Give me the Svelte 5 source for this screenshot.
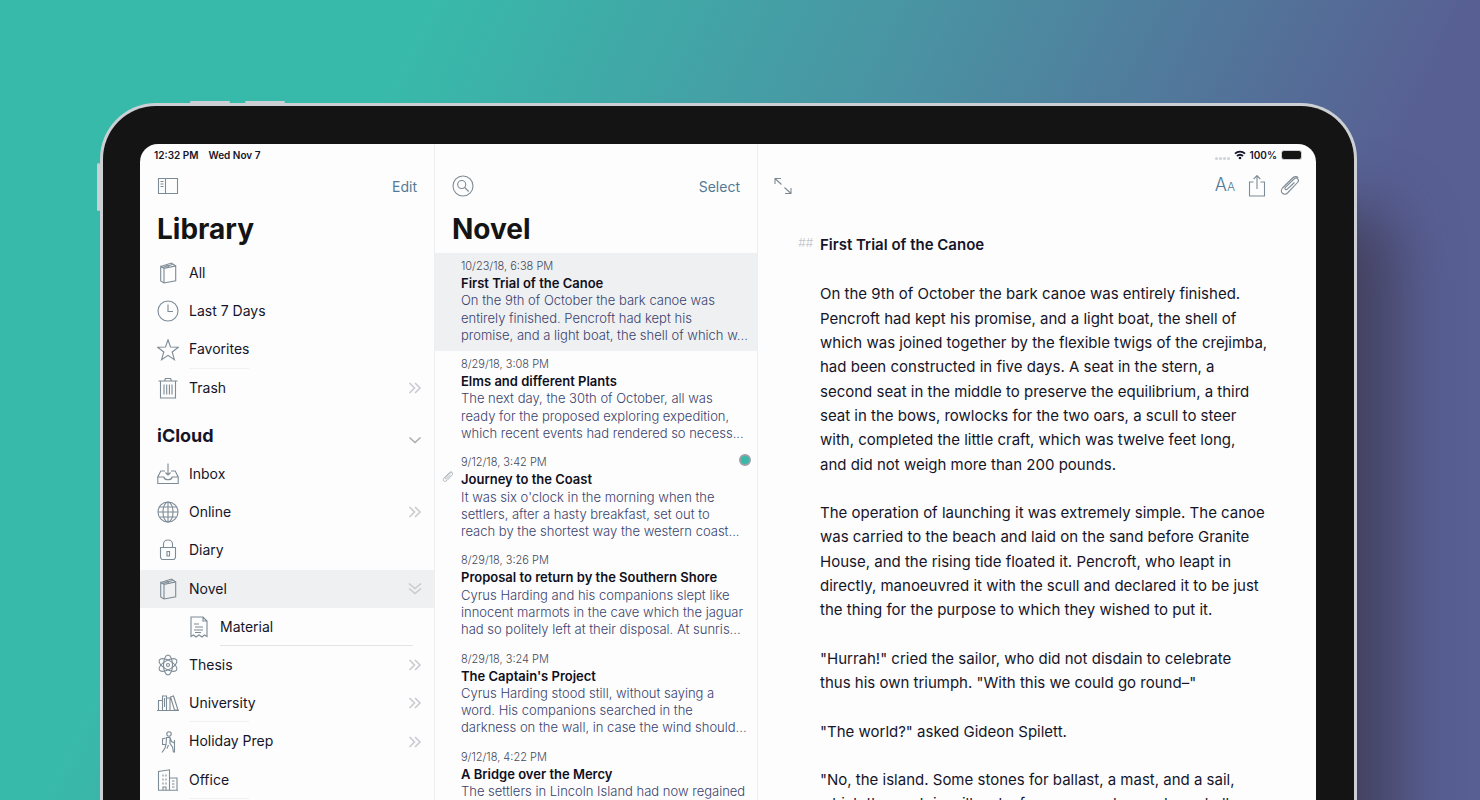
<script>
  const top = [
    { name: 'All', icon: 'book' },
    { name: 'Last 7 Days', icon: 'clock' },
    { name: 'Favorites', icon: 'star', rule: 'short' },
    { name: 'Trash', icon: 'trash', more: true },
  ];
  const cloud = [
    { name: 'Inbox', icon: 'inbox' },
    { name: 'Online', icon: 'globe', more: true },
    { name: 'Diary', icon: 'lock' },
    { name: 'Novel', icon: 'book', open: true },
    { name: 'Material', icon: 'sheet', child: true, rule: 'long' },
    { name: 'Thesis', icon: 'atom', more: true },
    { name: 'University', icon: 'shelf', more: true, rule: 'short' },
    { name: 'Holiday Prep', icon: 'hiker', more: true },
    { name: 'Office', icon: 'office', rule: 'short' },
  ];
  const sheets = [
    { date: '10/23/18, 6:38 PM', title: 'First Trial of the Canoe', active: true,
      text: 'On the 9th of October the bark canoe was\nentirely finished. Pencroft had kept his\npromise, and a light boat, the shell of which w...' },
    { date: '8/29/18, 3:08 PM', title: 'Elms and different Plants',
      text: 'The next day, the 30th of October, all was\nready for the proposed exploring expedition,\nwhich recent events had rendered so necess...' },
    { date: '9/12/18, 3:42 PM', title: 'Journey to the Coast', clip: true, goal: true,
      text: "It was six o'clock in the morning when the\nsettlers, after a hasty breakfast, set out to\nreach by the shortest way the western coast..." },
    { date: '8/29/18, 3:26 PM', title: 'Proposal to return by the Southern Shore',
      text: 'Cyrus Harding and his companions slept like\ninnocent marmots in the cave which the jaguar\nhad so politely left at their disposal. At sunris...' },
    { date: '8/29/18, 3:24 PM', title: "The Captain's Project",
      text: 'Cyrus Harding stood still, without saying a\nword. His companions searched in the\ndarkness on the wall, in case the wind should...' },
    { date: '9/12/18, 4:22 PM', title: 'A Bridge over the Mercy',
      text: 'The settlers in Lincoln Island had now regained' },
  ];
  const story = [
    'On the 9th of October the bark canoe was entirely finished.\nPencroft had kept his promise, and a light boat, the shell of\nwhich was joined together by the flexible twigs of the crejimba,\nhad been constructed in five days. A seat in the stern, a\nsecond seat in the middle to preserve the equilibrium, a third\nseat in the bows, rowlocks for the two oars, a scull to steer\nwith, completed the little craft, which was twelve feet long,\nand did not weigh more than 200 pounds.',
    'The operation of launching it was extremely simple. The canoe\nwas carried to the beach and laid on the sand before Granite\nHouse, and the rising tide floated it. Pencroft, who leapt in\ndirectly, manoeuvred it with the scull and declared it to be just\nthe thing for the purpose to which they wished to put it.',
    '"Hurrah!" cried the sailor, who did not disdain to celebrate\nthus his own triumph. "With this we could go round–"',
    '"The world?" asked Gideon Spilett.',
    '"No, the island. Some stones for ballast, a mast, and a sail,\nwhich the captain will make for us some day, and we shall',
  ];
</script>

{#snippet icon(name)}
  <svg class="icon" viewBox="0 0 22 22" aria-hidden="true">
    {#if name === 'book'}
      <path d="M3.700 4.500v14.500l3.300 2 11.700-2.300V4L7 6.300zM7 6.300V21M3.700 4.500L14.500 1l4.200 3M6 5.300l9.500-2.800M9 3l3 1.700" />
    {:else if name === 'clock'}
      <circle cx="11" cy="11" r="10" /><path d="M11 4.500V11.500h5" />
    {:else if name === 'star'}
      <path d="M11 .8l2.500 7.200 7.900.3-6.200 4.700 2.200 7.600L11 16.300l-6.400 4.300 2.200-7.600L.6 8.300l7.900-.3z" />
    {:else if name === 'trash'}
      <path d="M1.500 4h19M3.500 4v17h15V4M7.500 4l1-2.500h5l1 2.500M7 7.500v10M9.700 7.500v10M12.400 7.500v10M15 7.500v10" />
    {:else if name === 'inbox'}
      <path d="M.8 14v6.500h20.400V14l-3-6H14M8 8H3.800l-3 6h6c.5 1.800 1.500 2.800 4.200 2.800s3.700-1 4.200-2.800h6M11 .5V12M8.500 9.500L11 12l2.500-2.500" />
    {:else if name === 'globe'}
      <circle cx="11" cy="11" r="10" /><ellipse cx="11" cy="11" rx="5" ry="10" />
      <path d="M11 1v20M1 11h20M2.500 6h17M2.500 16h17" />
    {:else if name === 'lock'}
      <path d="M6.500 8.500V5a4.500 4 0 0 1 9 0v3.500M3.500 8.500h15v10l-1.500 2H5l-1.500-2zM10 12.500h2.500v4.500H10z" />
    {:else if name === 'sheet'}
      <path d="M3 1h12l4 4V20.500l-2.500-1.500-2.500 2-3-2-3 2-2.500-2L3 20.500zM15 1v4h4M6 8h5M7 11h8M6 14h9M7 16.500h6" />
    {:else if name === 'atom'}
      <ellipse cx="11" cy="11" rx="4.500" ry="10" />
      <ellipse cx="11" cy="11" rx="4.500" ry="10" transform="rotate(60 11 11)" />
      <ellipse cx="11" cy="11" rx="4.500" ry="10" transform="rotate(-60 11 11)" />
      <circle cx="11" cy="11" r="1.500" />
    {:else if name === 'shelf'}
      <path d="M0 18.500h22M1.500 18V8.500h4V18M5.500 18V4h4v14M9.500 18V6h3.500v12M13.500 5l3-1 4.500 14h-3.500zM7.500 6v9" />
    {:else if name === 'hiker'}
      <circle cx="12" cy="3" r="2.200" />
      <path d="M9 6.500h4l1.500 4 3 1.500M13 6.500v6l2.500 3.500 1 5.500M9.500 7l-.5 6.500L8 17l-3 4.500M11.500 14L10 17.500M8.500 7L5.500 8v5.500H9M17.500 9v12.500" />
    {:else if name === 'office'}
      <path d="M1 21.200h20M1.500 21V2.500l11-1.700V21M12.500 9H20v12M6 5.500v2M9 5.500v2M6 9.500v2M9 9.500v2M6 13.500v2M9 13.500v2M6 21v-3h3v3M15 12h2.500M15 15h2.500M15 18h2.500" />
    {:else if name === 'panel'}
      <path d="M1.500 3.500h19v15h-19zM8.500 3.500v15M3.500 6.500h3M3.500 9h3M3.500 11.500h3" />
    {:else if name === 'search'}
      <circle cx="11" cy="11" r="10" /><circle cx="9.700" cy="9.500" r="4" /><path d="M12.700 12.500l4 4" />
    {:else if name === 'expand'}
      <path d="M3 9V3.500h6M3 3.500l6.500 6M12.500 12.500l6.500 6M19 13v5.500h-6" />
    {:else if name === 'share'}
      <path d="M7.500 7H3.500v14h15V7h-4M11 14V.5M7.700 4L11 .6 14.300 4" />
    {:else if name === 'clip'}
      <path d="M15.500 7.500l-7.200 6.700c-1.400 1.500-3.300-.4-1.900-1.900L15 4c2.800-2.500 6 .8 3.500 3.500L9 17.500c-4 4-9-.5-5.500-4.500L13 3.500c2.200-2.200 4.600-2.500 6.200-.8" />
    {:else if name === 'right'}
      <path d="M5.500 6l5 5-5 5M11 6l5 5-5 5" />
    {:else if name === 'down2'}
      <path d="M5 5.500l6 5 6-5M5 10.500l6 5 6-5" />
    {:else if name === 'down'}
      <path d="M5.500 12.500l5.500 5 5.500-5" />
    {/if}
  </svg>
{/snippet}

{#snippet row(item)}
  <li>
    <a href="#{item.name}" class="row" class:open={item.open} class:child={item.child}>
      {@render icon(item.icon)}
      <span class="name">{item.name}</span>
      {#if item.more}<span class="chev">{@render icon('right')}</span>{/if}
      {#if item.open}<span class="chev">{@render icon('down2')}</span>{/if}
      {#if item.rule}<span class="rule {item.rule}"></span>{/if}
    </a>
  </li>
{/snippet}

<div class="stage">
  <div class="device">
    <span class="key power"></span>
    <span class="key power second"></span>
    <span class="key volume"></span>
    <div class="screen">
      <div class="status">
        <span>12:32 PM</span><span>Wed Nov 7</span>
        <span class="signal"><i></i><i></i><i></i><i></i></span>
        <svg class="wifi" viewBox="0 0 12 10" aria-hidden="true">
          <path d="M1 3.700a7.200 7.200 0 0 1 10 0M3 6a4.200 4.200 0 0 1 6 0" />
          <circle cx="6" cy="8" r="1.300" />
        </svg>
        <span>100%</span>
        <span class="battery"></span>
      </div>

      <nav class="library">
        <div class="bar">
          <button aria-label="Toggle library">{@render icon('panel')}</button>
          <button class="word">Edit</button>
        </div>
        <h1>Library</h1>
        <ul>{#each top as item}{@render row(item)}{/each}</ul>
        <h2>iCloud <span class="chev">{@render icon('down')}</span></h2>
        <ul>{#each cloud as item}{@render row(item)}{/each}</ul>
      </nav>

      <section class="sheets">
        <div class="bar">
          <button aria-label="Search">{@render icon('search')}</button>
          <button class="word">Select</button>
        </div>
        <h1>Novel</h1>
        {#each sheets as sheet}
          <article class="sheet" class:active={sheet.active}>
            <time>{sheet.date}</time>
            <h3>{sheet.title}</h3>
            <p>{sheet.text}</p>
            {#if sheet.clip}<span class="attached">{@render icon('clip')}</span>{/if}
            {#if sheet.goal}<span class="goal"></span>{/if}
          </article>
        {/each}
      </section>

      <main class="editor">
        <div class="bar">
          <button aria-label="Full screen">{@render icon('expand')}</button>
          <div class="tools">
            <button class="type" aria-label="Text style"><span>A</span><small>A</small></button>
            <button class="share" aria-label="Share">{@render icon('share')}</button>
            <button aria-label="Attachments">{@render icon('clip')}</button>
          </div>
        </div>
        <div class="text">
          <h2><span class="mark">##</span>First Trial of the Canoe</h2>
          {#each story as para}<p>{para}</p>{/each}
        </div>
      </main>
    </div>
  </div>
</div>

<style>
  :global(body) { margin: 0; }
  * { box-sizing: border-box; }
  h1, h2, h3, p, ul { margin: 0; padding: 0; }
  ul { list-style: none; }
  button { border: 0; padding: 0; background: none; font: inherit; color: #527a94; display: flex; }
  svg { display: block; fill: none; stroke: currentColor; }

  .stage {
    height: 100vh;
    overflow: hidden;
    display: flex;
    padding: 103px 123px 0 100px;
    font-family: Inter, "Liberation Sans", sans-serif;
    color: #15152a;
    background: linear-gradient(116deg, #38baaa 0%, #38baaa 23%, #4a93a3 50%, #585f93 79%, #585f93 100%);
  }
  .device {
    position: relative;
    flex: 1;
    min-width: 0;
    display: flex;
    padding: 38px 38px 0 37px;
    border: 3px solid #ccd0d5;
    border-bottom: 0;
    border-radius: 56px 56px 0 0;
    background: #141414;
    box-shadow: 56px 90px 60px -16px #444261;
  }
  .key { position: absolute; background: #ccd0d5; border-radius: 2px; }
  .power { top: -5px; left: 87px; width: 40px; height: 2px; }
  .second { left: 142px; }
  .volume { top: 57px; left: -6px; width: 3px; height: 48px; }
  .screen {
    position: relative;
    flex: 1;
    min-width: 0;
    display: grid;
    grid-template-columns: 295px 323px minmax(0, 1fr);
    border-radius: 18px 18px 0 0;
    background: #fdfdfd;
    overflow: hidden;
  }
  .status {
    position: absolute;
    top: 4px;
    left: 14px;
    right: 14px;
    display: flex;
    align-items: center;
    gap: 10px;
    font-size: 10px;
    line-height: 14px;
    font-weight: 600;
  }
  .signal { margin-left: auto; margin-right: -6px; display: flex; gap: 1px; padding-top: 6px; }
  .signal i { width: 3px; height: 3px; border-radius: 2px; background: #d0d3d7; }
  .wifi { width: 12px; height: 10px; margin-right: -6px; stroke-width: 1.8; }
  .wifi circle { fill: currentColor; stroke: none; }
  .battery { width: 21px; height: 10px; margin-left: -6px; border: 1px solid #cdd0d4; border-radius: 3px; background: #141414; }

  .bar { display: flex; align-items: center; justify-content: space-between; height: 24px; font-size: 14px; }
  .icon { width: 22px; height: 22px; flex: none; color: #7d8b96; stroke-width: 1.1; }
  .library, .sheets { border-right: 1px solid #eceef0; }
  .library, .sheets, .editor { padding-top: 30px; min-width: 0; }
  .library .bar, .sheets .bar { padding: 0 17px; }
  h1 { padding: 13px 17px 0; font-size: 28px; line-height: 36px; font-weight: 700; color: #141414; }
  .library ul { padding-top: 6px; }
  .library h1 + ul { padding-top: 7px; }
  .library h2 { display: flex; justify-content: space-between; align-items: center; padding: 16px 8px 0 17px; font-size: 18px; line-height: 26px; font-weight: 700; }
  .row {
    position: relative;
    display: flex;
    align-items: center;
    gap: 10px;
    padding: 0 8px 0 17px;
    font-size: 14px;
    line-height: 2.73;
    color: inherit;
    text-decoration: none;
  }
  .row.child { padding-left: 48px; }
  .row.open { background: #eff0f1; }
  .chev { margin-left: auto; }
  .chev .icon { color: #c8cbd0; stroke-width: 1.6; }
  h2 .chev .icon { color: #a9adb3; }
  .rule { position: absolute; bottom: 0; height: 1px; left: 49px; width: 60px; background: #f0f1f2; }
  .rule.long { left: 80px; right: 21px; width: auto; background: #e2e4e7; }

  .sheets h1 + .sheet { margin-top: 6px; }
  .sheet { position: relative; padding: 5px 12px 7px 26px; font-size: 13px; line-height: 1.33; }
  .sheet.active { background: #eff0f1; }
  time { display: block; font-size: 11px; line-height: 17px; font-weight: 300; color: #444859; }
  h3 { font-size: 13px; font-weight: 600; line-height: inherit; color: #0f0f20; }
  .sheet p { white-space: pre; font-weight: 300; color: #39426e; }
  .attached { position: absolute; left: 7px; top: 22px; }
  .attached .icon { width: 12px; height: 12px; color: #a9adb3; stroke-width: 1.6; }
  .goal { position: absolute; right: 6px; top: 5px; width: 12px; height: 12px; border-radius: 50%; background: #38baaa; border: 2px solid #9a9fa8; }

  .editor .bar { padding: 0 15px 0 14px; }
  .tools { display: flex; align-items: center; gap: 11px; }
  .type { align-items: baseline; font-size: 18px; line-height: 24px; font-weight: 300; }
  .type small { font-size: 12px; }
  .text { padding: 35px 0 0 62px; font-size: 15px; line-height: 1.623; }
  .text h2 { position: relative; font-size: 15px; font-weight: 600; line-height: inherit; margin-bottom: 25px; }
  .mark { position: absolute; left: -22px; font-weight: 300; font-style: italic; font-size: 12px; color: #c3c6cb; }
  .text p { white-space: pre; margin-bottom: 24px; }
</style>
